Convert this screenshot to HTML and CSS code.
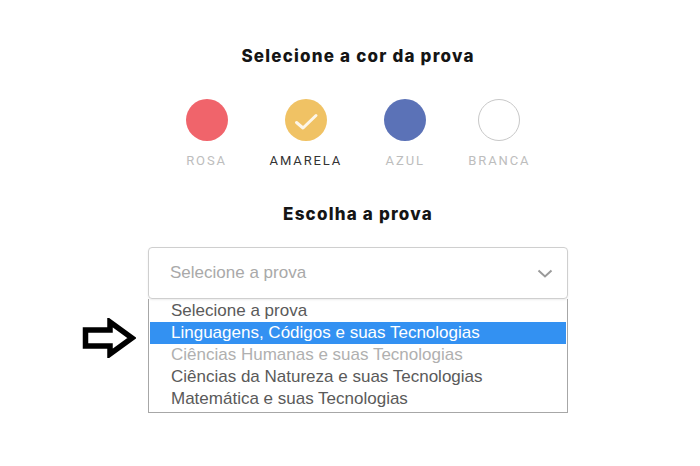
FILE: index.html
```html
<!DOCTYPE html>
<html lang="pt">
<head>
  <meta charset="UTF-8">
  <title>Escolha a prova</title>
  <link rel="stylesheet" href="styles.css">
</head>
<body>
  <div class="pagina">
    <h1 class="titulo">Selecione a cor da prova</h1>

    <div class="cores">
      <div class="cor">
        <span class="bolinha rosa"></span>
        <span class="rotulo">ROSA</span>
      </div>
      <div class="cor">
        <span class="bolinha amarela">
          <svg width="42" height="42" viewBox="0 0 42 42">
            <polyline points="11.5,23.5 18,29 31,16.5" fill="none" stroke="#fff" stroke-opacity="0.85" stroke-width="3" stroke-linecap="round" stroke-linejoin="round"/>
          </svg>
        </span>
        <span class="rotulo ativo">AMARELA</span>
      </div>
      <div class="cor">
        <span class="bolinha azul"></span>
        <span class="rotulo">AZUL</span>
      </div>
      <div class="cor">
        <span class="bolinha branca"></span>
        <span class="rotulo">BRANCA</span>
      </div>
    </div>

    <h2 class="titulo subtitulo">Escolha a prova</h2>

    <div class="seletor">
      <div class="campo">
        <span>Selecione a prova</span>
        <svg width="16" height="9" viewBox="0 0 16 9">
          <polyline points="1.5,1.5 8,7.5 14.5,1.5" fill="none" stroke="#9a9a9a" stroke-width="2"/>
        </svg>
      </div>
      <ul class="lista">
        <li>Selecione a prova</li>
        <li class="marcado">Linguagens, Códigos e suas Tecnologias</li>
        <li class="desativado">Ciências Humanas e suas Tecnologias</li>
        <li>Ciências da Natureza e suas Tecnologias</li>
        <li>Matemática e suas Tecnologias</li>
      </ul>
      <!-- seta de destaque -->
      <svg class="seta" width="54" height="40" viewBox="0 0 54 40">
        <path d="M3.5 12 H28 V4 L50 20 L28 36 V28 H3.5 Z" fill="#fff" stroke="#000" stroke-width="5.5" stroke-linejoin="miter"/>
      </svg>
    </div>
  </div>
</body>
</html>
```

FILE: styles.css
```css
* {
  box-sizing: border-box;
  margin: 0;
  padding: 0;
}

body {
  background: #fff;
  font-family: Inter, "Noto Sans", sans-serif;
}

.pagina {
  width: 700px;
  padding: 45px 0 0 16px;
  display: flex;
  flex-direction: column;
  align-items: center;
}

.titulo {
  font-size: 17px;
  line-height: 22px;
  font-weight: 800;
  letter-spacing: 1.2px;
  color: #151515;
}

.cores {
  display: flex;
  gap: 42px;
  margin-top: 32px;
}

.cor {
  display: flex;
  flex-direction: column;
  align-items: center;
}

.bolinha {
  display: block;
  width: 42px;
  height: 42px;
  border-radius: 50%;
}

.rosa { background: #f0646b; }
.amarela { background: #f0c264; }
.azul { background: #5b72b7; }
.branca { background: #fff; border: 1px solid #c8c8c8; }

.rotulo {
  margin-top: 12px;
  font-family: Roboto, "Liberation Sans", sans-serif;
  font-size: 13px;
  line-height: 16px;
  letter-spacing: 1.9px;
  color: #bdbdbd;
}

.rotulo.ativo {
  color: #333;
}

.subtitulo {
  margin-top: 34px;
}

.seletor {
  position: relative;
  width: 420px;
  margin-top: 22px;
  font-family: "Liberation Sans", Arial, sans-serif;
  font-size: 17px;
}

.campo {
  height: 52px;
  border: 1px solid #cfcfcf;
  border-radius: 4px;
  box-shadow: 0 1px 2px rgba(0,0,0,0.08);
  display: flex;
  align-items: center;
  justify-content: space-between;
  padding: 0 14px 0 21px;
  color: #a9a9a9;
}

.lista {
  list-style: none;
  border: 1px solid #a7a7a7;
  border-top: none;
  padding: 1px 1px 2px;
}

.lista li {
  height: 22px;
  line-height: 22px;
  padding-left: 21px;
  color: #5a5a5a;
}

.lista li.marcado {
  background: #3391f2;
  color: #fff;
}

.lista li.desativado {
  color: #b0b0b0;
}

.seta {
  position: absolute;
  left: -66px;
  top: 71px;
}
```
